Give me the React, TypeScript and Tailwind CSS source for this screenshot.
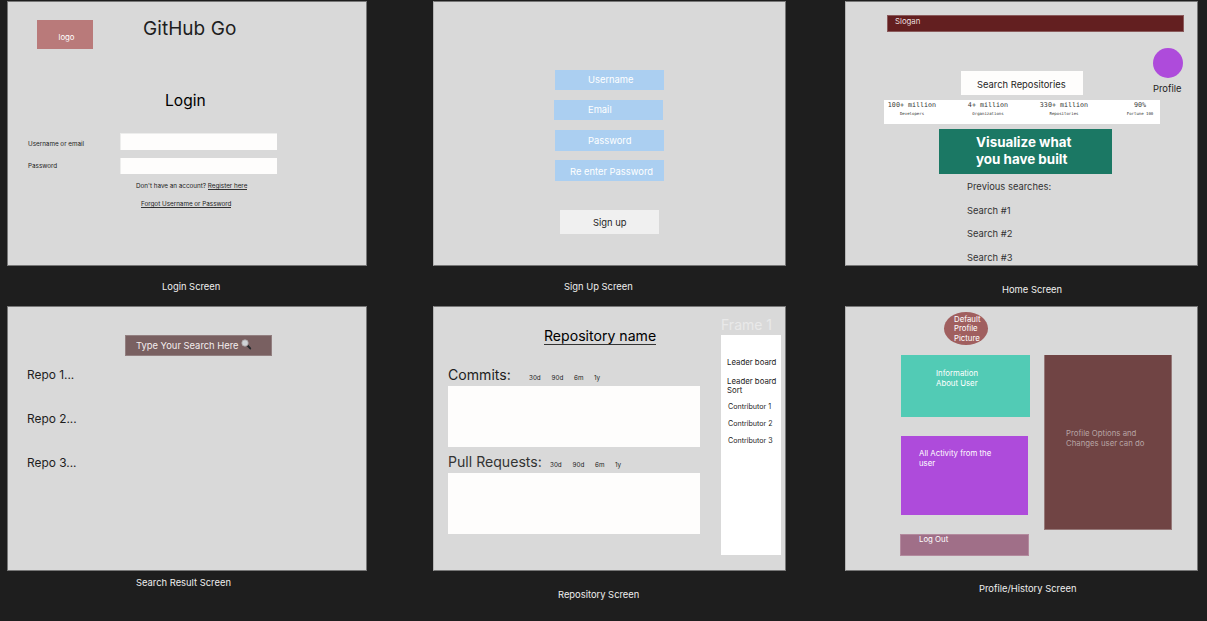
import type { ReactNode } from "react";

type ScreenProps = {
  frame: string;
  caption: string;
  captionClass: string;
  children: ReactNode;
};

function Screen({ frame, caption, captionClass, children }: ScreenProps) {
  return (
    <section className="shrink-0">
      <div className={`h-[265px] border bg-[#d9d9d9] ${frame}`}>{children}</div>
      <h2 className={`h-3 text-[9.4px] leading-3 text-[#eeeeee] ${captionClass}`}>{caption}</h2>
    </section>
  );
}

function LoginScreen() {
  return (
    <Screen frame="w-[360px] border-[#777777]" caption="Login Screen" captionClass="mt-[15px] ml-[155px]">
      <div className="flex pt-[18px] pl-[29px]">
        <div className="h-[29px] w-[56px] bg-[#b97a7a] pt-[11px] pl-[21.5px] text-[7.8px] leading-[12px] text-white">
          logo
        </div>
        <h1 className="-mt-[3px] ml-[50px] text-[19px] leading-6 tracking-[0.05px] text-[#1e1e1e]">GitHub Go</h1>
      </div>
      <h2 className="mt-[42px] ml-[157px] text-[15.6px] leading-5 text-black">Login</h2>
      <div className="mt-[22px] flex pl-[20px] text-[6.3px] leading-[10px] text-[#222222]">
        <div className="w-[92px]">
          <div className="mt-[6px]">Username or email</div>
          <div className="mt-[12px]">Password</div>
        </div>
        <div className="flex flex-col gap-2">
          <div className="h-[17px] w-[157px] border-t border-l border-[#ededec] bg-[#fefdfc]" />
          <div className="h-[16px] w-[157px] border-l border-[#ededec] bg-[#fefdfc]" />
        </div>
      </div>
      <div className="mt-[7px] ml-[128px] text-[6.3px] leading-[10px] text-[#222222]">
        Don't have an account? <span className="inline-block h-[9px] border-b border-[#333333]">Register here</span>
      </div>
      <div className="mt-[8px] ml-[133px] text-[6.3px] leading-[10px] text-[#222222]">
        <span className="inline-block h-[9px] border-b border-[#333333]">Forgot Username or Password</span>
      </div>
    </Screen>
  );
}

function SignUpScreen() {
  return (
    <Screen frame="w-[353px] border-[#777777] border-l-[#b5b5b5]" caption="Sign Up Screen" captionClass="mt-[15px] ml-[131px]">
      <div className="flex flex-col pt-[68px] pl-[120px] text-[9.4px] leading-3 text-white">
        <div className="ml-px h-[20px] w-[109px] bg-[#abcff1] pt-[4px] pl-[33px]">Username</div>
        <div className="mt-[10px] h-[20px] w-[109px] bg-[#abcff1] pt-[4px] pl-[34px]">Email</div>
        <div className="mt-[10px] ml-px h-[21px] w-[109px] bg-[#abcff1] pt-[5px] pl-[33px]">Password</div>
        <div className="mt-[9px] ml-px h-[21px] w-[109px] bg-[#abcff1] pt-[6px] pl-[15px]">Re enter Password</div>
        <div className="mt-[29px] ml-[6px] h-[24px] w-[99px] bg-[#f0f0f0] pt-[7px] pl-[33px] text-[#1e1e1e]">
          Sign up
        </div>
      </div>
    </Screen>
  );
}

function Stat({ value, label, className }: { value: string; label: string; className: string }) {
  return (
    <div className={`flex shrink-0 flex-col items-center whitespace-nowrap ${className}`}>
      <div className="text-[6.7px] leading-[11px] text-[#333333]">{value}</div>
      <div className="text-[4px] leading-[6px] text-[#333333]">{label}</div>
    </div>
  );
}

function HomeScreen() {
  return (
    <Screen frame="w-[353px] border-[#777777] border-l-[#b5b5b5]" caption="Home Screen" captionClass="mt-[18px] ml-[157px]">
      <div className="pt-[13px] pl-[41px]">
        <div className="h-[17px] w-[297px] border border-[#8a5a5b] bg-[#631f20] pl-[7px] text-[7.8px] leading-[11px] text-[#e8dede]">
          Slogan
        </div>
      </div>
      <div className="flex">
        <div className="mt-[39px] ml-[115px] h-[24px] w-[122px] bg-[#fefdfc] pt-[8px] pl-[16px] text-[9.4px] leading-3 whitespace-nowrap text-[#1e1e1e]">
          Search Repositories
        </div>
        <div className="mt-[16px] ml-[70px] h-[46px]">
          <div className="size-[30px] rounded-full bg-[#ae4bdb]" />
          <div className="mt-[5px] text-[9.4px] leading-3 text-[#1e1e1e]">Profile</div>
        </div>
      </div>
      <div className="mt-[5px] ml-[38px] flex h-[24px] w-[276px] bg-white font-['DejaVu_Sans_Mono',monospace]">
        <Stat value="100+ million" label="Developers" className="w-[56px]" />
        <Stat value="4+ million" label="Organizations" className="ml-[20px] w-[56px]" />
        <Stat value="330+ million" label="Repositories" className="ml-[20px] w-[56px]" />
        <Stat value="90%" label="Fortune 100" className="ml-[20px] w-[56px]" />
      </div>
      <div className="mt-[5px] ml-[93px] h-[45px] w-[173px] bg-[#1b7864] pt-[5px] pl-[37px] text-[13.4px] leading-[16.5px] font-bold text-white">
        Visualize what
        <br />
        you have built
      </div>
      <div className="mt-[7px] ml-[121px] flex flex-col gap-[11.6px] text-[9.4px] leading-3 text-[#333333]">
        <div>Previous searches:</div>
        <div>Search #1</div>
        <div>Search #2</div>
        <div>Search #3</div>
      </div>
    </Screen>
  );
}

function Magnifier() {
  return (
    <svg viewBox="0 0 11 11" className="mt-[3px] ml-[2px] size-[11px]">
      <path d="M6.6 6.6 9.2 9.4" stroke="#24292c" strokeWidth="2" strokeLinecap="round" />
      <circle cx="4" cy="4" r="3.2" fill="#cfd3d6" stroke="#a9a5a6" strokeWidth="0.8" />
    </svg>
  );
}

function SearchResultScreen() {
  return (
    <Screen frame="w-[360px] border-[#777777]" caption="Search Result Screen" captionClass="mt-[6px] ml-[129px]">
      <div className="pt-[28px] pl-[117px]">
        <div className="flex h-[21px] w-[147px] border border-[#927f80] bg-[#796061] pl-[10px] text-[9.4px] whitespace-nowrap text-[#f3eded]">
          <span className="mt-[4px] leading-3">Type Your Search Here</span>
          <Magnifier />
        </div>
      </div>
      <div className="mt-[11px] ml-[19px] flex flex-col gap-[28px] text-[11.9px] leading-4 text-[#1e1e1e]">
        <div>Repo 1...</div>
        <div>Repo 2...</div>
        <div>Repo 3...</div>
      </div>
    </Screen>
  );
}

function Ranges({ className }: { className: string }) {
  return (
    <div className={`flex text-[6.3px] leading-[10px] text-[#222222] ${className}`}>
      <span className="w-[22.5px]">30d</span>
      <span className="w-[22.5px]">90d</span>
      <span className="w-[20px]">6m</span>
      <span>1y</span>
    </div>
  );
}

function RepositoryScreen() {
  return (
    <Screen frame="w-[353px] border-[#777777] border-l-[#b5b5b5]" caption="Repository Screen" captionClass="mt-[18px] ml-[125px]">
      <div className="flex whitespace-nowrap">
        <div className="w-[287px] pl-[14px]">
          <h2 className="mt-[19px] ml-[96px] h-[19px] w-fit border-b border-[#333333] text-[14.1px] leading-[20px] text-black">
            Repository name
          </h2>
          <div className="mt-[20px] flex text-[14.1px] leading-5 text-[#1e1e1e]">
            <h3 className="w-[81px]">Commits:</h3>
            <Ranges className="mt-[8px]" />
          </div>
          <div className="mt-px h-[61px] w-[252px] bg-[#fefdfc]" />
          <div className="mt-[5px] flex text-[14.1px] leading-5 text-[#333333]">
            <h3 className="w-[102px]">Pull Requests:</h3>
            <Ranges className="mt-[8px]" />
          </div>
          <div className="mt-px h-[61px] w-[252px] bg-[#fefdfc]" />
        </div>
        <div>
          <h3 className="mt-[9px] text-[14px] leading-[17px] text-[#e9e9e9]">Frame 1</h3>
          <div className="mt-[2px] h-[220px] w-[60px] bg-white pt-[23px] pl-[6px] text-[7.8px] leading-[9.5px] text-[#222222]">
            <div>Leader board</div>
            <div className="mt-[9px]">
              Leader board
              <br />
              Sort
            </div>
            <div className="mt-[6px] ml-px flex flex-col gap-[7.7px] text-[7.1px]">
              <div>Contributor 1</div>
              <div>Contributor 2</div>
              <div>Contributor 3</div>
            </div>
          </div>
        </div>
      </div>
    </Screen>
  );
}

function ProfileScreen() {
  return (
    <Screen frame="w-[353px] border-[#777777] border-l-[#b5b5b5]" caption="Profile/History Screen" captionClass="mt-[12px] ml-[134px]">
      <div className="text-[7.8px] leading-[9.5px] whitespace-nowrap text-white">
        <div className="pt-[5px] pl-[98px]">
          <div className="h-[33px] w-[44px] rounded-[50%] bg-[#a05f5f] pt-[2.5px] pl-[10px]">
            Default
            <br />
            Profile
            <br />
            Picture
          </div>
        </div>
        <div className="mt-[10px] flex pl-[54px]">
          <div className="w-[144px]">
            <div className="ml-px h-[62px] w-[129px] bg-[#52cbb5] pt-[14px] pl-[35px]">
              Information
              <br />
              About User
            </div>
            <div className="mt-[19px] ml-px h-[79px] w-[127px] bg-[#ae4bdb] pt-[13px] pl-[18px]">
              All Activity from the
              <br />
              user
            </div>
            <div className="mt-[19px] h-[22px] w-[129px] border border-[#b38a9e] bg-[#a06f88] pl-[18px]">Log Out</div>
          </div>
          <div className="h-[175px] w-[128px] border border-t-0 border-[#957878] bg-[#704444] pt-[74px] pl-[21px] text-[#b7a3a3]">
            Profile Options and
            <br />
            Changes user can do
          </div>
        </div>
      </div>
    </Screen>
  );
}

export default function App() {
  return (
    <main className="h-[621px] w-[1207px] overflow-hidden bg-[#1e1e1e] pt-px pl-[7px] font-['Inter',sans-serif]">
      <div className="flex h-[305px] items-start">
        <LoginScreen />
        <div className="ml-[66px]">
          <SignUpScreen />
        </div>
        <div className="ml-[59px]">
          <HomeScreen />
        </div>
      </div>
      <div className="flex items-start">
        <SearchResultScreen />
        <div className="ml-[66px]">
          <RepositoryScreen />
        </div>
        <div className="ml-[59px]">
          <ProfileScreen />
        </div>
      </div>
    </main>
  );
}
